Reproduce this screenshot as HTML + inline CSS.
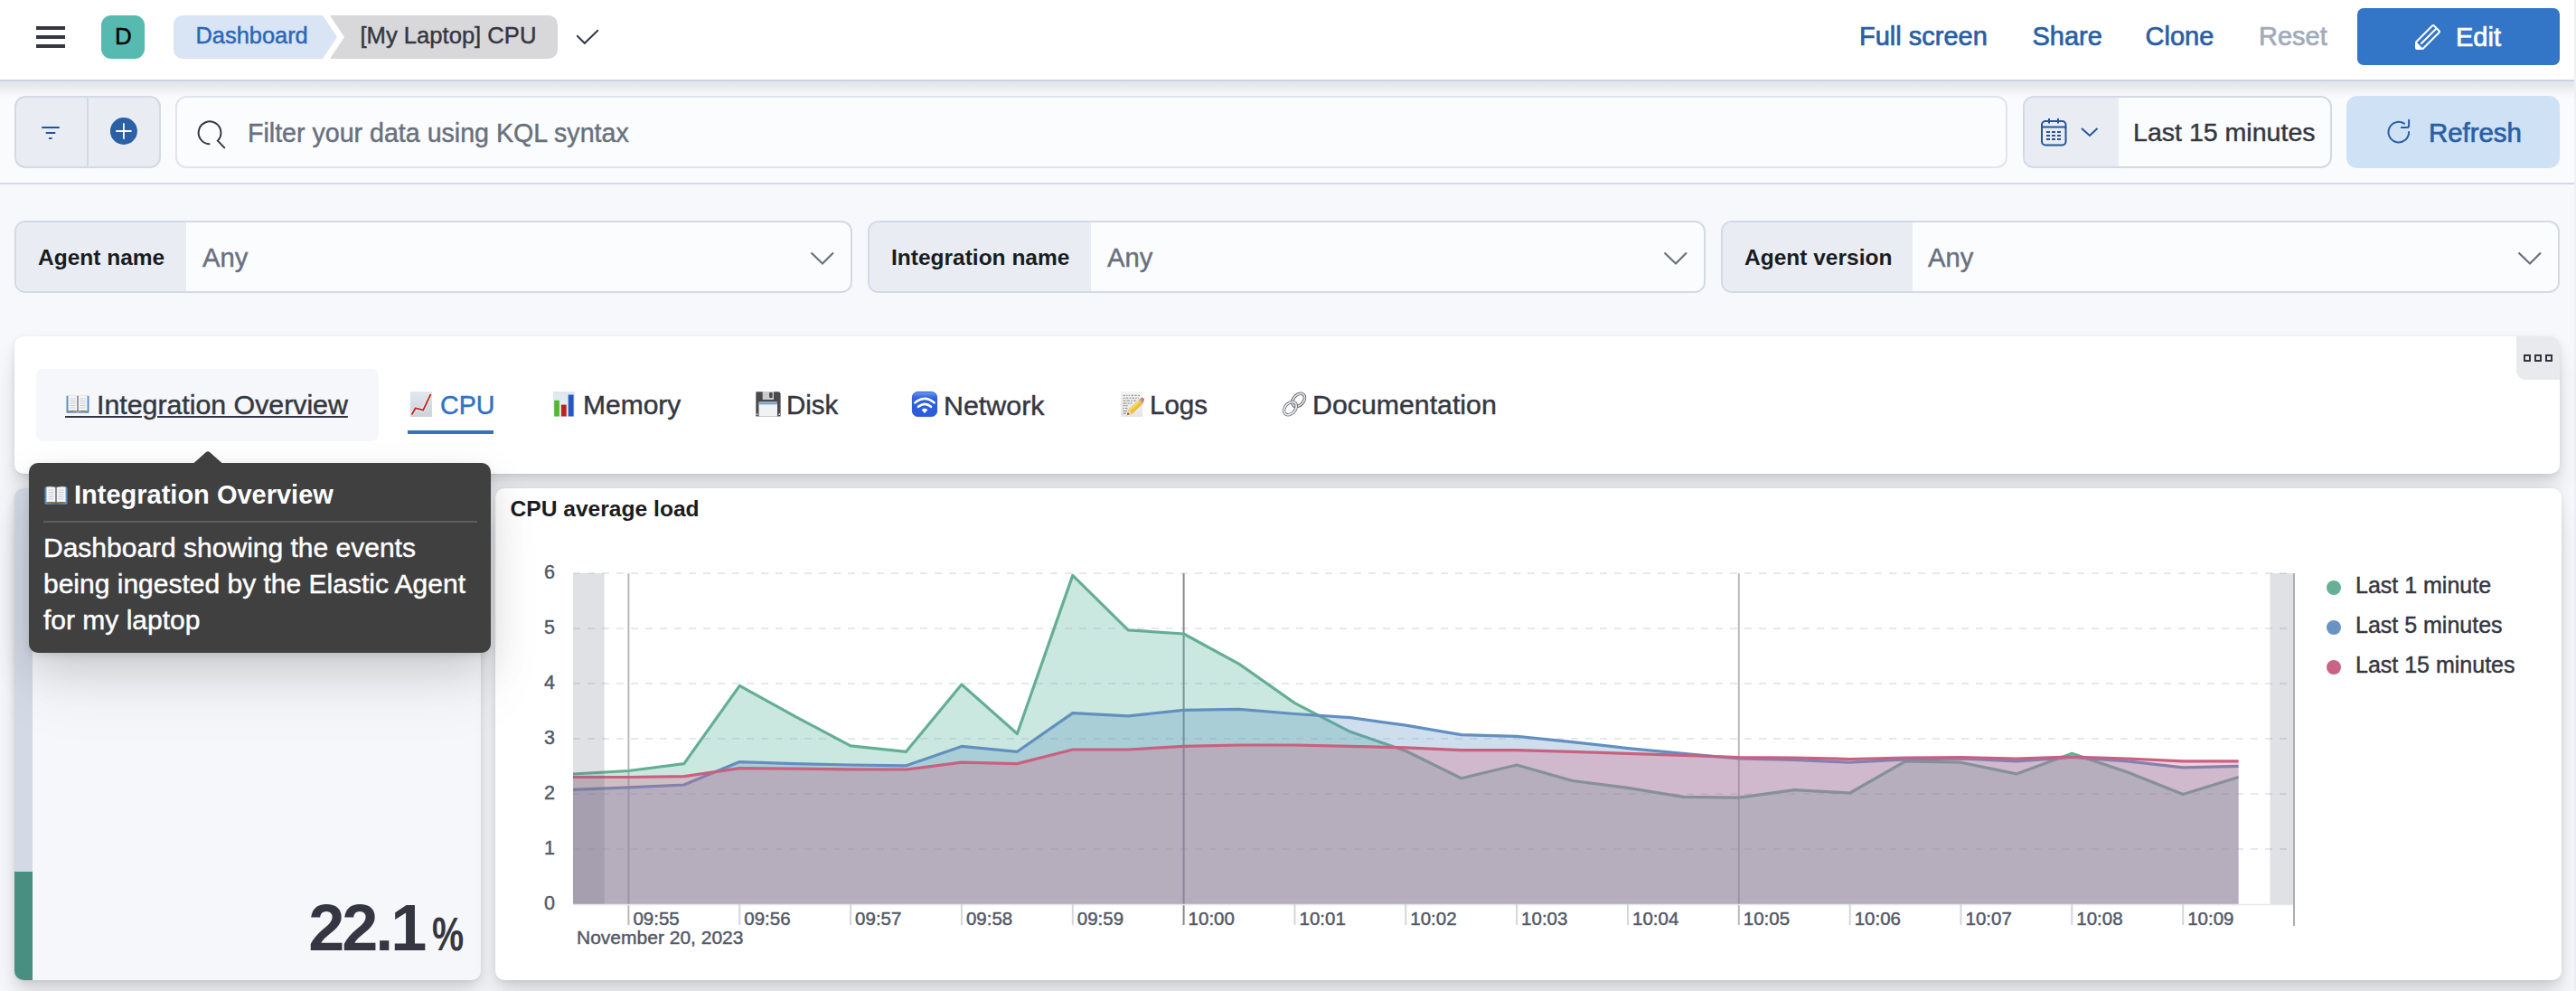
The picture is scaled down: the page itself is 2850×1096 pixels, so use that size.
<!DOCTYPE html>
<html><head><meta charset="utf-8">
<style>
*{box-sizing:border-box;margin:0;padding:0}
html,body{width:2850px;height:1096px;overflow:hidden;background:#F7F8FC;font-family:"Liberation Sans",sans-serif;color:#343741}
.a{position:absolute}
.t{position:absolute;white-space:pre;line-height:1}
.r{-webkit-text-stroke:0.45px currentColor}
svg{position:absolute;overflow:visible}
</style></head><body>

<!-- HEADER -->
<div class="a" style="left:0;top:0;width:2848px;height:90px;background:#fff;border-bottom:2px solid #CDD3DF;box-shadow:0 3px 14px rgba(40,50,70,0.12)"></div>
<div class="a" style="left:2848px;top:0;width:2px;height:1096px;background:#EEF0F4"></div>
<!-- hamburger -->
<div class="a" style="left:40px;top:29.1px;width:32px;height:3.8px;background:#343741"></div>
<div class="a" style="left:40px;top:39px;width:32px;height:3.8px;background:#343741"></div>
<div class="a" style="left:40px;top:49.1px;width:32px;height:3.8px;background:#343741"></div>
<!-- avatar -->
<div class="a" style="left:112px;top:17px;width:48px;height:48px;border-radius:11px;background:#57BAB0"></div>
<div class="t" style="left:112.5px;top:26.8px;width:48px;text-align:center;font-size:26px;font-weight:400;color:#000;-webkit-text-stroke:0.4px #000">D</div>
<!-- breadcrumbs -->
<svg style="left:0;top:0" width="700" height="90">
  <path d="M202 17 H357 L373 41 L357 65 H202 A10 10 0 0 1 192 55 V27 A10 10 0 0 1 202 17 Z" fill="#D9E4F4"/>
  <path d="M365 17 H607 A10 10 0 0 1 617 27 V55 A10 10 0 0 1 607 65 H365 L381 41 Z" fill="#D8D8DB"/>
  <path d="M638.7 39.8 L646.8 47.8 L661.3 33.7" fill="none" stroke="#343741" stroke-width="1.9" stroke-linecap="round"/>
</svg>
<div class="t r" style="left:216.5px;top:27.3px;font-size:25.4px;color:#2A66B8">Dashboard</div>
<div class="t r" style="left:398.5px;top:27.2px;font-size:25.6px;color:#343741">[My Laptop] CPU</div>
<!-- header links -->
<div class="t" style="left:2057px;top:26.4px;font-size:29px;color:#2A5FA5;-webkit-text-stroke:0.7px #2A5FA5">Full screen</div>
<div class="t" style="left:2248.5px;top:26.4px;font-size:29px;color:#2A5FA5;-webkit-text-stroke:0.7px #2A5FA5">Share</div>
<div class="t" style="left:2373.5px;top:26.4px;font-size:29px;color:#2A5FA5;-webkit-text-stroke:0.7px #2A5FA5">Clone</div>
<div class="t" style="left:2499px;top:26.4px;font-size:29px;color:#A2ABBA;-webkit-text-stroke:0.7px #A2ABBA">Reset</div>
<div class="a" style="left:2608px;top:9px;width:224px;height:63px;border-radius:7px;background:#3376C7"></div>
<svg style="left:2666px;top:21px" width="40" height="40" viewBox="0 0 40 40">
  <g transform="translate(4,4) scale(2)">
  <path fill="#fff" d="M12.148 3.148L11 2l-9 9v3h3l9-9-1.144-1.144-8.002 7.998a.502.502 0 01-.708 0 .502.502 0 010-.708l8.002-7.998zM11 1c.256 0 .512.098.707.293l3 3a.999.999 0 010 1.414l-9 9A.997.997 0 015 15H2a1 1 0 01-1-1v-3c0-.265.105-.52.293-.707l9-9A.997.997 0 0111 1zM5 14H2v-3l3 3z"/>
  </g>
</svg>
<div class="t" style="left:2717px;top:26.7px;font-size:29px;color:#fff;-webkit-text-stroke:0.7px #fff">Edit</div>

<!-- FILTER BAR -->
<div class="a" style="left:0;top:90px;width:2848px;height:114px;background:#FAFBFD;border-bottom:2px solid #D3DAE6"></div>
<div class="a" style="left:0;top:90px;width:2848px;height:18px;background:linear-gradient(#E2E3E6,rgba(247,248,252,0))"></div>
<div class="a" style="left:16px;top:106px;width:162px;height:80px;border-radius:12px;background:#E9EDF3;border:2px solid #D3DAE6"></div>
<div class="a" style="left:96px;top:107px;width:2px;height:78px;background:#D3DAE6"></div>
<svg style="left:0;top:90px" width="200" height="100">
  <path d="M47 51 H65 M51.5 57 H60.5 M54.8 63 H56.8" stroke="#1F55A0" stroke-width="2" stroke-linecap="round" fill="none"/>
  <circle cx="136.9" cy="55" r="15" fill="#2A60A6"/>
  <path d="M136.9 46.3 V63.7 M128.2 55 H145.6" stroke="#fff" stroke-width="1.8"/>
</svg>
<div class="a" style="left:194px;top:106px;width:2027px;height:80px;border-radius:12px;background:#FBFCFD;border:2px solid #E0E4EE"></div>
<svg style="left:200px;top:120px" width="60" height="60">
  <path d="M31.5 39.2 A12.4 12.4 0 1 1 40.8 35.6 L48.3 43.4" fill="none" stroke="#343741" stroke-width="2" stroke-linecap="round" stroke-linejoin="miter"/>
</svg>
<div class="t r" style="left:274px;top:132.8px;font-size:28.6px;color:#69707D">Filter your data using KQL syntax</div>
<!-- time picker -->
<div class="a" style="left:2238px;top:106px;width:342px;height:80px;border-radius:12px;background:#FBFCFD;border:2px solid #D3DAE6;overflow:hidden">
  <div class="a" style="left:0;top:0;width:104px;height:76px;background:#E9EDF3"></div>
</div>
<svg style="left:2250px;top:126px" width="80" height="40">
  <rect x="9" y="8" width="26.5" height="26.5" rx="4" fill="none" stroke="#24549A" stroke-width="2"/>
  <path d="M9 14.5 H35.5 M17 5 V10.5 M27 5 V10.5" stroke="#24549A" stroke-width="2"/>
  <g fill="#24549A">
    <rect x="14" y="19" width="4" height="2"/><rect x="20" y="19" width="4" height="2"/><rect x="26" y="19" width="4" height="2"/>
    <rect x="14" y="23" width="4" height="2"/><rect x="20" y="23" width="4" height="2"/><rect x="26" y="23" width="4" height="2"/>
    <rect x="14" y="27" width="4" height="2"/><rect x="20" y="27" width="4" height="2"/><rect x="26" y="27" width="4" height="2"/>
  </g>
  <path d="M53 16 L62 24 L70.5 16" fill="none" stroke="#24549A" stroke-width="2"/>
</svg>
<div class="t r" style="left:2360px;top:131.6px;font-size:28.55px;color:#343741">Last 15 minutes</div>
<div class="a" style="left:2596px;top:106px;width:236px;height:80px;border-radius:12px;background:#CFE1F4"></div>
<svg style="left:2630px;top:126px" width="50" height="40">
  <path d="M30 10.7 A11.3 11.3 0 1 0 35.1 20" fill="none" stroke="#2A5FA5" stroke-width="2" stroke-linecap="round"/>
  <path d="M26.9 15.1 H33 Q35.1 15.1 35.1 13 V6.7" fill="none" stroke="#2A5FA5" stroke-width="2" stroke-linecap="round"/>
</svg>
<div class="t" style="left:2687px;top:131.9px;font-size:29.4px;color:#2A5FA5;-webkit-text-stroke:0.7px #2A5FA5">Refresh</div>

<!-- CONTROLS -->
<div class="a" style="left:16px;top:244px;width:927px;height:80px;border-radius:12px;background:#FBFCFD;border:2px solid #D3DAE6;overflow:hidden"><div class="a" style="left:0;top:0;width:188px;height:76px;background:#E9EDF3"></div></div>
<div class="t" style="left:42px;top:273.4px;font-size:24.5px;font-weight:700;color:#1A1C21">Agent name</div>
<div class="t r" style="left:224px;top:270.9px;font-size:29.2px;color:#69707D">Any</div>
<svg style="left:890px;top:270px" width="40" height="30"><path d="M7.5 9.5 L20 21.5 L32 9.5" fill="none" stroke="#69707D" stroke-width="2.2"/></svg>

<div class="a" style="left:960px;top:244px;width:927px;height:80px;border-radius:12px;background:#FBFCFD;border:2px solid #D3DAE6;overflow:hidden"><div class="a" style="left:0;top:0;width:245px;height:76px;background:#E9EDF3"></div></div>
<div class="t" style="left:986px;top:273.4px;font-size:24.5px;font-weight:700;color:#1A1C21">Integration name</div>
<div class="t r" style="left:1225px;top:270.9px;font-size:29.2px;color:#69707D">Any</div>
<svg style="left:1834px;top:270px" width="40" height="30"><path d="M7.5 9.5 L20 21.5 L32 9.5" fill="none" stroke="#69707D" stroke-width="2.2"/></svg>

<div class="a" style="left:1904px;top:244px;width:928px;height:80px;border-radius:12px;background:#FBFCFD;border:2px solid #D3DAE6;overflow:hidden"><div class="a" style="left:0;top:0;width:210px;height:76px;background:#E9EDF3"></div></div>
<div class="t" style="left:1930px;top:273.4px;font-size:24.5px;font-weight:700;color:#1A1C21">Agent version</div>
<div class="t r" style="left:2133px;top:270.9px;font-size:29.2px;color:#69707D">Any</div>
<svg style="left:2779px;top:270px" width="40" height="30"><path d="M7.5 9.5 L20 21.5 L32 9.5" fill="none" stroke="#69707D" stroke-width="2.2"/></svg>


<!-- TABS PANEL -->
<div class="a" style="left:16px;top:372px;width:2816px;height:152px;border-radius:10px;background:#fff;box-shadow:0 1px 5px -1px rgba(0,0,0,0.08),0 4px 12px -1px rgba(0,0,0,0.08),0 12px 24px -1px rgba(0,0,0,0.07),0 30px 30px -1px rgba(0,0,0,0.06)"></div>
<div class="a" style="left:2784px;top:372px;width:48px;height:48px;border-radius:0 10px 0 10px;background:#E9EAED"></div>
<svg style="left:2788px;top:388px" width="40" height="16"><g fill="none" stroke="#343741" stroke-width="2"><rect x="5" y="5" width="6" height="6"/><rect x="17" y="5" width="6" height="6"/><rect x="29" y="5" width="6" height="6"/></g></svg>
<div class="a" style="left:40px;top:408px;width:379px;height:80px;border-radius:8px;background:#F5F7FA"></div>
<svg style="left:73px;top:437px" width="26" height="20" viewBox="0 0 26 20">
<path d="M0.5 1.5 Q0.5 0.8 1.3 0.8 L3 0.8 L3 18 L12 18.5 L12.6 19.5 L13.4 19.5 L14 18.5 L23 18 L23 0.8 L24.7 0.8 Q25.5 0.8 25.5 1.5 L25.5 19 Q25.5 19.8 24.7 19.8 L1.3 19.8 Q0.5 19.8 0.5 19 Z" fill="#5A8FC4"/>
<path d="M2.5 0.5 Q7 -0.3 12.5 1 L12.5 17.5 Q7 16.6 2.5 17.6 Z" fill="#F4F5F8" stroke="#C9CCD2" stroke-width="0.4"/>
<path d="M13.5 1 Q19 -0.3 23.5 0.5 L23.5 17.6 Q19 16.6 13.5 17.5 Z" fill="#F4F5F8" stroke="#C9CCD2" stroke-width="0.4"/>
<rect x="12.3" y="0.8" width="1.4" height="17.2" fill="#7A7C82"/>
<g stroke="#B9BCC3" stroke-width="0.7"><path d="M4.5 4 H10.5 M4.5 6.5 H10.5 M4.5 9 H10.5 M4.5 11.5 H10.5 M4.5 14 H10 M15.5 4 H21.5 M15.5 6.5 H21.5 M15.5 9 H21.5 M15.5 11.5 H21.5 M15.5 14 H21"/></g>
<path d="M2.5 17.6 Q7 16.6 12.5 17.5 L13.5 17.5 Q19 16.6 23.5 17.6 L23.5 18.4 Q19 17.5 13.5 18.4 L12.5 18.4 Q7 17.5 2.5 18.4 Z" fill="#8B6B3E"/>
</svg>
<div class="t r" style="left:107px;top:432.6px;font-size:30.3px;color:#343741;text-decoration:underline;text-decoration-thickness:2px;text-underline-offset:1.8px;text-decoration-skip-ink:auto">Integration Overview</div>
<div class="a" style="left:72px;top:460px;width:35px;height:2px;background:#343741"></div>
<svg style="left:454px;top:433px" width="24" height="28" viewBox="0 0 24 28">
<defs><linearGradient id="cg" x1="0" y1="0" x2="0" y2="1"><stop offset="0" stop-color="#E2E8EF"/><stop offset="1" stop-color="#CDD2D9"/></linearGradient></defs>
<rect x="0" y="0" width="24" height="28" fill="url(#cg)"/>
<path d="M1.6 25.5 L5.8 18.3 L14.2 20.7 L22.6 2.8" fill="none" stroke="#E8F6FA" stroke-width="3.6" stroke-linejoin="round"/>
<path d="M1.6 25.5 L5.8 18.3 L14.2 20.7 L22.6 2.8" fill="none" stroke="#C3231C" stroke-width="1.9" stroke-linejoin="round"/>
</svg>
<div class="t r" style="left:487px;top:433.5px;font-size:28.6px;color:#3172C4">CPU</div>
<div class="a" style="left:451px;top:476px;width:95px;height:4px;background:#3373C6"></div>
<svg style="left:612px;top:433px" width="24" height="28" viewBox="0 0 24 28">
<defs><linearGradient id="bg2" x1="0" y1="0" x2="0" y2="1"><stop offset="0" stop-color="#E0E6EE"/><stop offset="1" stop-color="#EEF1F5"/></linearGradient></defs>
<rect x="0" y="0" width="24" height="28" fill="url(#bg2)"/>
<rect x="1.2" y="9.8" width="5.7" height="17.7" fill="#4FB83A"/>
<rect x="8.9" y="14.6" width="5.8" height="12.9" fill="#B8241A"/>
<rect x="16.7" y="3.5" width="5.9" height="24" fill="#2856C0"/>
</svg>
<div class="t r" style="left:645px;top:432.6px;font-size:30px;color:#343741">Memory</div>
<svg style="left:836px;top:433px" width="28" height="28" viewBox="0 0 28 28">
<path d="M0.3 1 Q0.3 0.3 1 0.3 L26 0.3 L27.6 2 L27.6 27 Q27.6 27.5 27 27.5 L1 27.5 Q0.3 27.5 0.3 27 Z" fill="#4A4A4C"/>
<rect x="7.7" y="0" width="12.3" height="9" fill="#C9CACC"/>
<rect x="15.1" y="1" width="3.5" height="6" rx="1" fill="#4A4A4C"/>
<rect x="3.5" y="11.6" width="20.5" height="15.9" rx="0.8" fill="#F1F2F3"/>
<rect x="3.5" y="12.3" width="20.5" height="2" fill="#6C9FDA"/>
<circle cx="1.6" cy="25.2" r="0.9" fill="#E0E0E0"/><circle cx="26.2" cy="25.2" r="0.9" fill="#E0E0E0"/>
</svg>
<div class="t r" style="left:870px;top:432.6px;font-size:29.5px;color:#343741">Disk</div>
<svg style="left:1009px;top:433px" width="28" height="28" viewBox="0 0 28 28">
<defs><linearGradient id="wg" x1="0" y1="0" x2="0" y2="1"><stop offset="0" stop-color="#6E9BF0"/><stop offset="0.25" stop-color="#2E62E2"/><stop offset="1" stop-color="#2A5BDD"/></linearGradient></defs>
<rect x="0.4" y="0.4" width="27.2" height="27.2" rx="6" fill="url(#wg)" stroke="#1F46B5" stroke-width="0.8"/>
<path d="M3.5 12.3 Q14 3.5 24.5 12.3" fill="none" stroke="#fff" stroke-width="2.6" stroke-linecap="round"/>
<path d="M7 16.8 Q14 10.8 21 16.8" fill="none" stroke="#fff" stroke-width="2.6" stroke-linecap="round"/>
<path d="M10.6 20.3 Q14 17.4 17.4 20.3 L14 24 Z" fill="#fff"/>
</svg>
<div class="t r" style="left:1044px;top:432.6px;font-size:30.4px;color:#343741">Network</div>
<svg style="left:1240px;top:433px" width="26" height="28" viewBox="0 0 26 28">
<defs><linearGradient id="mg" x1="0" y1="0" x2="0" y2="1"><stop offset="0" stop-color="#F3F3F3"/><stop offset="1" stop-color="#E6E6E6"/></linearGradient></defs>
<rect x="0" y="0" width="24" height="28" fill="url(#mg)"/>
<g stroke="#4A4A4A" stroke-width="0.75" fill="none" opacity="0.8">
<path d="M2.5 4.3 H21" stroke-dasharray="2.5 1 1.5 1 1.5 1.2 3 1 2.5 1"/>
<path d="M2.5 7.2 H20" stroke-dasharray="1.8 1 3 1.2 2 1 2.5 1"/>
<path d="M2.5 10.1 H17" stroke-dasharray="3 1 3.5 1 2 1"/>
<path d="M2.5 13 H14" stroke-dasharray="4 1 2 1 2"/>
<path d="M2.5 15.6 H9" stroke-dasharray="2 1 2"/>
<path d="M2.5 18.5 H8" stroke-dasharray="1.5 1 2.5"/>
<path d="M2.5 21.5 H7"/>
<path d="M2.5 24.2 H6"/>
</g>
<path d="M7.2 25.8 L8.6 20.4 L21.2 8.6 L24.9 12.4 L12.4 24.3 Z" fill="#F1C232" stroke="#C98F14" stroke-width="0.5"/>
<path d="M8.6 20.4 L21.2 8.6 L22.6 10 L10 21.8 Z" fill="#F8DA6A"/>
<path d="M7.2 25.8 L8.6 20.4 L12.4 24.3 Z" fill="#F2D9A8"/>
<path d="M7.2 25.8 L7.8 23.4 L9.5 25.1 Z" fill="#2E2E2E"/>
<path d="M21.2 8.6 L22.9 7 Q24 6.1 25.1 7.2 L25.8 7.9 Q26.6 9 25.6 10 L24.9 12.4 Z" fill="#E36F7F"/>
<path d="M20.6 9.2 L24.3 12.9" stroke="#9FB6CC" stroke-width="1.3"/>
</svg>
<div class="t r" style="left:1272px;top:432.6px;font-size:29.5px;color:#343741">Logs</div>
<svg style="left:1418px;top:433px" width="28" height="28" viewBox="0 0 28 28">
<g fill="none">
<ellipse cx="18.6" cy="9.4" rx="8.2" ry="5.6" transform="rotate(-47 18.6 9.4)" stroke="#574E52" stroke-width="3.4"/>
<ellipse cx="18.6" cy="9.4" rx="8.2" ry="5.6" transform="rotate(-47 18.6 9.4)" stroke="#D9DFE8" stroke-width="1.9"/>
<ellipse cx="9.4" cy="18.6" rx="8.2" ry="5.6" transform="rotate(-47 9.4 18.6)" stroke="#6F6A70" stroke-width="3.4"/>
<ellipse cx="9.4" cy="18.6" rx="8.2" ry="5.6" transform="rotate(-47 9.4 18.6)" stroke="#E4E9F0" stroke-width="1.9"/>
</g>
</svg>
<div class="t r" style="left:1452px;top:432.6px;font-size:30.3px;color:#343741">Documentation</div>
<div class="a" style="left:16px;top:540px;width:516px;height:544px;border-radius:10px;background:#F5F7FA;overflow:hidden;box-shadow:0 1px 5px -1px rgba(0,0,0,0.08),0 4px 12px -1px rgba(0,0,0,0.08),0 12px 24px -1px rgba(0,0,0,0.07),0 30px 30px -1px rgba(0,0,0,0.06)"><div class="a" style="left:0;top:0;width:20px;height:424px;background:#D3DAE6"></div><div class="a" style="left:0;top:424px;width:20px;height:120px;background:#498F81"></div></div>
<div class="t" style="left:341.2px;top:990px;font-size:72px;font-weight:700;color:#343741;letter-spacing:-3px">22.1</div>
<div class="t" style="left:477.8px;top:1007.2px;font-size:52px;font-weight:700;color:#343741;transform:scaleX(0.76);transform-origin:0 0">%</div>
<div class="a" style="left:548px;top:540px;width:2286px;height:544px;border-radius:10px;background:#fff;box-shadow:0 1px 5px -1px rgba(0,0,0,0.08),0 4px 12px -1px rgba(0,0,0,0.08),0 12px 24px -1px rgba(0,0,0,0.07),0 30px 30px -1px rgba(0,0,0,0.06)"></div>
<div class="t" style="left:564.5px;top:551.4px;font-size:24.6px;font-weight:700;color:#1A1C21">CPU average load</div>
<svg style="left:0;top:0" width="2850" height="1096">
<line x1="634" y1="939" x2="2537" y2="939" stroke="#E5E8F0" stroke-width="2" stroke-dasharray="8 8"/>
<line x1="634" y1="878" x2="2537" y2="878" stroke="#E5E8F0" stroke-width="2" stroke-dasharray="8 8"/>
<line x1="634" y1="817" x2="2537" y2="817" stroke="#E5E8F0" stroke-width="2" stroke-dasharray="8 8"/>
<line x1="634" y1="756" x2="2537" y2="756" stroke="#E5E8F0" stroke-width="2" stroke-dasharray="8 8"/>
<line x1="634" y1="695" x2="2537" y2="695" stroke="#E5E8F0" stroke-width="2" stroke-dasharray="8 8"/>
<line x1="634" y1="634" x2="2537" y2="634" stroke="#E5E8F0" stroke-width="2" stroke-dasharray="8 8"/>
<line x1="695.4" y1="634" x2="695.4" y2="1023" stroke="#B8B9BE" stroke-width="2"/>
<line x1="1309.6" y1="634" x2="1309.6" y2="1023" stroke="#88898F" stroke-width="2"/>
<line x1="1923.8" y1="634" x2="1923.8" y2="1023" stroke="#B8B9BE" stroke-width="2"/>
<path d="M634.0 856.0 L695.4 852.5 L756.8 844.6 L818.3 758.4 L879.7 792.3 L941.1 824.8 L1002.5 831.3 L1063.9 757.0 L1125.4 811.5 L1186.8 636.4 L1248.2 696.8 L1309.6 701.0 L1371.0 734.4 L1432.5 777.6 L1493.9 809.3 L1555.3 830.5 L1616.7 860.7 L1678.1 846.0 L1739.6 863.5 L1801.0 871.4 L1862.4 881.3 L1923.8 882.1 L1985.2 873.7 L2046.7 877.0 L2108.1 841.8 L2169.5 843.2 L2230.9 855.9 L2292.3 833.3 L2353.8 853.9 L2415.2 878.5 L2476.6 859.5 L2476.6 1000.0 L634.0 1000.0 Z" fill="#54B399" fill-opacity="0.3"/>
<path d="M634.0 856.0 L695.4 852.5 L756.8 844.6 L818.3 758.4 L879.7 792.3 L941.1 824.8 L1002.5 831.3 L1063.9 757.0 L1125.4 811.5 L1186.8 636.4 L1248.2 696.8 L1309.6 701.0 L1371.0 734.4 L1432.5 777.6 L1493.9 809.3 L1555.3 830.5 L1616.7 860.7 L1678.1 846.0 L1739.6 863.5 L1801.0 871.4 L1862.4 881.3 L1923.8 882.1 L1985.2 873.7 L2046.7 877.0 L2108.1 841.8 L2169.5 843.2 L2230.9 855.9 L2292.3 833.3 L2353.8 853.9 L2415.2 878.5 L2476.6 859.5" fill="none" stroke="#64AF94" stroke-width="3.2" stroke-linejoin="round"/>
<path d="M634.0 873.4 L695.4 870.8 L756.8 868.0 L818.3 842.6 L879.7 844.6 L941.1 846.0 L1002.5 846.8 L1063.9 825.4 L1125.4 831.3 L1186.8 788.6 L1248.2 791.8 L1309.6 785.3 L1371.0 784.4 L1432.5 789.5 L1493.9 793.7 L1555.3 802.2 L1616.7 812.7 L1678.1 814.4 L1739.6 820.6 L1801.0 827.6 L1862.4 833.3 L1923.8 839.0 L1985.2 840.3 L2046.7 843.2 L2108.1 839.8 L2169.5 839.0 L2230.9 841.8 L2292.3 837.5 L2353.8 841.8 L2415.2 848.8 L2476.6 847.4 L2476.6 1000.0 L634.0 1000.0 Z" fill="#6092C0" fill-opacity="0.3"/>
<path d="M634.0 873.4 L695.4 870.8 L756.8 868.0 L818.3 842.6 L879.7 844.6 L941.1 846.0 L1002.5 846.8 L1063.9 825.4 L1125.4 831.3 L1186.8 788.6 L1248.2 791.8 L1309.6 785.3 L1371.0 784.4 L1432.5 789.5 L1493.9 793.7 L1555.3 802.2 L1616.7 812.7 L1678.1 814.4 L1739.6 820.6 L1801.0 827.6 L1862.4 833.3 L1923.8 839.0 L1985.2 840.3 L2046.7 843.2 L2108.1 839.8 L2169.5 839.0 L2230.9 841.8 L2292.3 837.5 L2353.8 841.8 L2415.2 848.8 L2476.6 847.4" fill="none" stroke="#6190C0" stroke-width="3.2" stroke-linejoin="round"/>
<path d="M634.0 859.5 L695.4 859.5 L756.8 858.7 L818.3 849.7 L879.7 850.2 L941.1 850.8 L1002.5 851.0 L1063.9 843.2 L1125.4 844.6 L1186.8 829.0 L1248.2 829.0 L1309.6 825.4 L1371.0 824.0 L1432.5 824.0 L1493.9 825.4 L1555.3 826.8 L1616.7 829.6 L1678.1 829.6 L1739.6 831.3 L1801.0 833.3 L1862.4 835.3 L1923.8 837.5 L1985.2 838.0 L2046.7 839.5 L2108.1 838.0 L2169.5 837.5 L2230.9 839.0 L2292.3 837.0 L2353.8 839.0 L2415.2 841.8 L2476.6 841.8 L2476.6 1000.0 L634.0 1000.0 Z" fill="#D36086" fill-opacity="0.3"/>
<path d="M634.0 859.5 L695.4 859.5 L756.8 858.7 L818.3 849.7 L879.7 850.2 L941.1 850.8 L1002.5 851.0 L1063.9 843.2 L1125.4 844.6 L1186.8 829.0 L1248.2 829.0 L1309.6 825.4 L1371.0 824.0 L1432.5 824.0 L1493.9 825.4 L1555.3 826.8 L1616.7 829.6 L1678.1 829.6 L1739.6 831.3 L1801.0 833.3 L1862.4 835.3 L1923.8 837.5 L1985.2 838.0 L2046.7 839.5 L2108.1 838.0 L2169.5 837.5 L2230.9 839.0 L2292.3 837.0 L2353.8 839.0 L2415.2 841.8 L2476.6 841.8" fill="none" stroke="#C8617F" stroke-width="3.2" stroke-linejoin="round"/>
<rect x="634" y="634" width="34.6" height="366" fill="rgb(100,105,120)" fill-opacity="0.2"/>
<rect x="2511.5" y="634" width="26" height="366" fill="rgb(100,105,120)" fill-opacity="0.2"/>
<line x1="634" y1="1000.5" x2="2538" y2="1000.5" stroke="#E6E8EF" stroke-width="1.5"/>
<line x1="2538" y1="634" x2="2538" y2="1024" stroke="#ADAEB3" stroke-width="2"/>
<line x1="818.3" y1="1000" x2="818.3" y2="1023" stroke="#D3D6DC" stroke-width="2"/>
<line x1="941.1" y1="1000" x2="941.1" y2="1023" stroke="#D3D6DC" stroke-width="2"/>
<line x1="1063.9" y1="1000" x2="1063.9" y2="1023" stroke="#D3D6DC" stroke-width="2"/>
<line x1="1186.8" y1="1000" x2="1186.8" y2="1023" stroke="#D3D6DC" stroke-width="2"/>
<line x1="1432.5" y1="1000" x2="1432.5" y2="1023" stroke="#D3D6DC" stroke-width="2"/>
<line x1="1555.3" y1="1000" x2="1555.3" y2="1023" stroke="#D3D6DC" stroke-width="2"/>
<line x1="1678.1" y1="1000" x2="1678.1" y2="1023" stroke="#D3D6DC" stroke-width="2"/>
<line x1="1801.0" y1="1000" x2="1801.0" y2="1023" stroke="#D3D6DC" stroke-width="2"/>
<line x1="2046.7" y1="1000" x2="2046.7" y2="1023" stroke="#D3D6DC" stroke-width="2"/>
<line x1="2169.5" y1="1000" x2="2169.5" y2="1023" stroke="#D3D6DC" stroke-width="2"/>
<line x1="2292.3" y1="1000" x2="2292.3" y2="1023" stroke="#D3D6DC" stroke-width="2"/>
<line x1="2415.2" y1="1000" x2="2415.2" y2="1023" stroke="#D3D6DC" stroke-width="2"/>
</svg>
<div class="t r" style="left:570px;width:44px;text-align:right;top:989.0px;font-size:21.5px;color:#535966">0</div>
<div class="t r" style="left:570px;width:44px;text-align:right;top:928.0px;font-size:21.5px;color:#535966">1</div>
<div class="t r" style="left:570px;width:44px;text-align:right;top:867.0px;font-size:21.5px;color:#535966">2</div>
<div class="t r" style="left:570px;width:44px;text-align:right;top:806.0px;font-size:21.5px;color:#535966">3</div>
<div class="t r" style="left:570px;width:44px;text-align:right;top:745.0px;font-size:21.5px;color:#535966">4</div>
<div class="t r" style="left:570px;width:44px;text-align:right;top:684.0px;font-size:21.5px;color:#535966">5</div>
<div class="t r" style="left:570px;width:44px;text-align:right;top:623.0px;font-size:21.5px;color:#535966">6</div>
<div class="t r" style="left:700.4px;top:1006.1px;font-size:20.5px;color:#535966">09:55</div>
<div class="t r" style="left:823.3px;top:1006.1px;font-size:20.5px;color:#535966">09:56</div>
<div class="t r" style="left:946.1px;top:1006.1px;font-size:20.5px;color:#535966">09:57</div>
<div class="t r" style="left:1068.9px;top:1006.1px;font-size:20.5px;color:#535966">09:58</div>
<div class="t r" style="left:1191.8px;top:1006.1px;font-size:20.5px;color:#535966">09:59</div>
<div class="t r" style="left:1314.6px;top:1006.1px;font-size:20.5px;color:#535966">10:00</div>
<div class="t r" style="left:1437.5px;top:1006.1px;font-size:20.5px;color:#535966">10:01</div>
<div class="t r" style="left:1560.3px;top:1006.1px;font-size:20.5px;color:#535966">10:02</div>
<div class="t r" style="left:1683.1px;top:1006.1px;font-size:20.5px;color:#535966">10:03</div>
<div class="t r" style="left:1806.0px;top:1006.1px;font-size:20.5px;color:#535966">10:04</div>
<div class="t r" style="left:1928.8px;top:1006.1px;font-size:20.5px;color:#535966">10:05</div>
<div class="t r" style="left:2051.7px;top:1006.1px;font-size:20.5px;color:#535966">10:06</div>
<div class="t r" style="left:2174.5px;top:1006.1px;font-size:20.5px;color:#535966">10:07</div>
<div class="t r" style="left:2297.3px;top:1006.1px;font-size:20.5px;color:#535966">10:08</div>
<div class="t r" style="left:2420.2px;top:1006.1px;font-size:20.5px;color:#535966">10:09</div>
<div class="t r" style="left:638px;top:1026.2px;font-size:21px;color:#535966">November 20, 2023</div>
<div class="a" style="left:2574px;top:642px;width:16px;height:16px;border-radius:50%;background:#67B094"></div>
<div class="t r" style="left:2606px;top:635.4px;font-size:25px;color:#343741">Last 1 minute</div>
<div class="a" style="left:2574px;top:686px;width:16px;height:16px;border-radius:50%;background:#6A92C2"></div>
<div class="t r" style="left:2606px;top:679.4px;font-size:25px;color:#343741">Last 5 minutes</div>
<div class="a" style="left:2574px;top:730px;width:16px;height:16px;border-radius:50%;background:#C96488"></div>
<div class="t r" style="left:2606px;top:723.4px;font-size:25px;color:#343741">Last 15 minutes</div>
<div class="a" style="left:32px;top:512px;width:511px;height:210px;border-radius:10px;background:#404040;box-shadow:0 3px 10px rgba(0,0,0,0.10),0 18px 46px rgba(0,0,0,0.13),0 46px 70px rgba(0,0,0,0.06)"></div>
<svg style="left:210px;top:495px" width="40" height="20"><path d="M4 17.5 L18 5 Q20 3.5 22 5 L36 17.5 Z" fill="#404040"/></svg>
<svg style="left:49px;top:538px" width="26" height="20" viewBox="0 0 26 20">
<path d="M0.5 1.5 Q0.5 0.8 1.3 0.8 L3 0.8 L3 18 L12 18.5 L12.6 19.5 L13.4 19.5 L14 18.5 L23 18 L23 0.8 L24.7 0.8 Q25.5 0.8 25.5 1.5 L25.5 19 Q25.5 19.8 24.7 19.8 L1.3 19.8 Q0.5 19.8 0.5 19 Z" fill="#5A8FC4"/>
<path d="M2.5 0.5 Q7 -0.3 12.5 1 L12.5 17.5 Q7 16.6 2.5 17.6 Z" fill="#F4F5F8" stroke="#C9CCD2" stroke-width="0.4"/>
<path d="M13.5 1 Q19 -0.3 23.5 0.5 L23.5 17.6 Q19 16.6 13.5 17.5 Z" fill="#F4F5F8" stroke="#C9CCD2" stroke-width="0.4"/>
<rect x="12.3" y="0.8" width="1.4" height="17.2" fill="#7A7C82"/>
<g stroke="#B9BCC3" stroke-width="0.7"><path d="M4.5 4 H10.5 M4.5 6.5 H10.5 M4.5 9 H10.5 M4.5 11.5 H10.5 M4.5 14 H10 M15.5 4 H21.5 M15.5 6.5 H21.5 M15.5 9 H21.5 M15.5 11.5 H21.5 M15.5 14 H21"/></g>
<path d="M2.5 17.6 Q7 16.6 12.5 17.5 L13.5 17.5 Q19 16.6 23.5 17.6 L23.5 18.4 Q19 17.5 13.5 18.4 L12.5 18.4 Q7 17.5 2.5 18.4 Z" fill="#8B6B3E"/>
</svg>
<div class="t" style="left:82px;top:533.1px;font-size:29px;font-weight:700;color:#fff">Integration Overview</div>
<div class="a" style="left:48px;top:576px;width:480px;height:2px;background:#5E5E5E"></div>
<div class="a r" style="left:48px;top:585.5px;width:495px;font-size:30px;line-height:40px;color:#fff">Dashboard showing the events<br>being ingested by the Elastic Agent<br>for my laptop</div>
</body></html>
